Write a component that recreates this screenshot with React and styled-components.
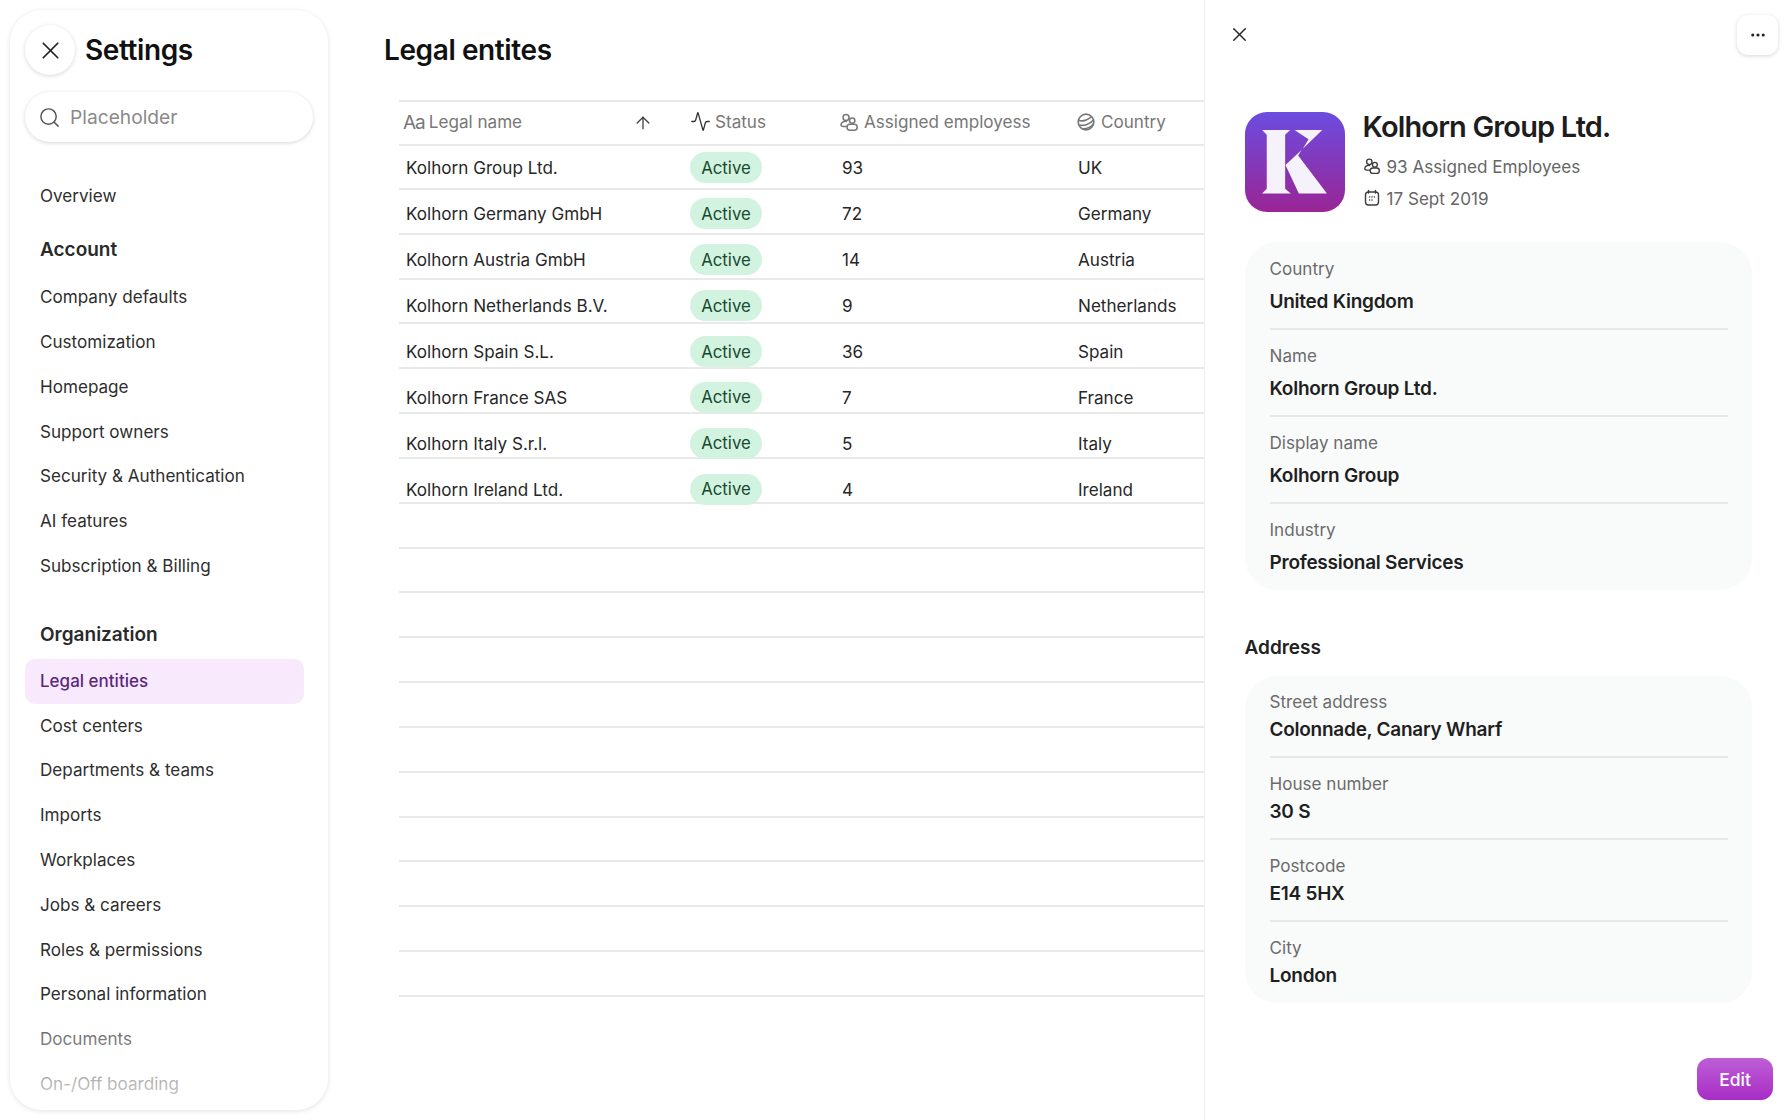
import React from "react";
import styled, { createGlobalStyle } from "styled-components";
import { X, Search, ArrowUp, Activity, MoreHorizontal } from "lucide-react";

const Global = createGlobalStyle`
  html, body { margin: 0; padding: 0; background: #fff; }
  body { font-family: Inter, "Noto Sans", sans-serif; color: #222; -webkit-font-smoothing: antialiased; }
  * { box-sizing: border-box; }
`;

const Page = styled.div`
  display: flex;
  width: 1792px;
  height: 1120px;
  overflow: hidden;
  background: #fff;
`;

const SideColumn = styled.div`
  flex: 0 0 328px;
  padding: 10px 0 10px 10px;
  display: flex;
`;

const SideCard = styled.aside`
  position: relative;
  flex: 1;
  border-radius: 32px;
  background: #fff;
  box-shadow: 0 1px 5px rgba(0, 0, 0, 0.12);
  padding: 15px 15px 0;
  overflow: hidden;
  display: flex;
  flex-direction: column;
  &::after {
    content: "";
    position: absolute;
    left: 0;
    right: 0;
    bottom: 0;
    height: 90px;
    background: linear-gradient(to bottom, rgba(255,255,255,0), rgba(255,255,255,0.78));
    pointer-events: none;
  }
`;

const SideHeader = styled.div`
  display: flex;
  align-items: center;
  gap: 10px;
`;

const RoundButton = styled.div`
  width: 50px;
  height: 50px;
  border-radius: 50%;
  background: #fff;
  box-shadow: 0 1px 4px rgba(0, 0, 0, 0.16);
  display: flex;
  align-items: center;
  justify-content: center;
  color: #222;
`;

const PageTitle = styled.h1`
  margin: 0;
  font-size: 28px;
  line-height: 34px;
  font-weight: 600;
  letter-spacing: -0.4px;
  color: #111;
`;

const SearchBox = styled.div`
  margin-top: 17px;
  width: 288px;
  height: 50px;
  border-radius: 25px;
  background: #fff;
  box-shadow: 0 1px 4px rgba(0, 0, 0, 0.16);
  display: flex;
  align-items: center;
  padding-left: 13px;
  gap: 9px;
  font-size: 19.2px;
  color: #8a8a8a;
`;

const NavList = styled.nav`
  margin-top: 31px;
  width: 279px;
  display: flex;
  flex-direction: column;
`;

const NavItem = styled.div`
  height: 44.8px;
  flex: none;
  display: flex;
  align-items: center;
  padding-left: 15px;
  font-size: ${(p) => (p.$active ? "17px" : "17.1px")};
  font-weight: ${(p) => (p.$active ? 500 : 400)};
  color: ${(p) => (p.$active ? "#5b2a7e" : p.$muted ? "#5e5e5e" : "#2e2e2e")};
  background: ${(p) => (p.$active ? "#f9e9fc" : "transparent")};
  border-radius: 10px;
  margin: ${(p) => (p.$active ? "1px 0 -1px" : "0")};
  padding-bottom: ${(p) => (p.$active ? "1px" : "0")};
`;

const NavHeading = styled.div`
  display: flex;
  align-items: center;
  padding-left: 15px;
  height: 30px;
  font-size: 19px;
  font-weight: 600;
  color: #2a2a2a;
  margin-top: ${(p) => p.$top}px;
  margin-bottom: ${(p) => p.$bottom}px;
`;

const Main = styled.main`
  flex: 0 0 876px;
  padding: 33px 0 0 56px;
  overflow: hidden;
`;

const Table = styled.div`
  margin: 33px 0 0 15px;
  width: 805px;
`;

const columns = "291px 149px 237px 1fr";

const HeadRow = styled.div`
  display: grid;
  grid-template-columns: ${columns};
  height: 46px;
  padding-bottom: 3px;
  align-items: center;
  border-top: 2px solid #e9e9e9;
  border-bottom: 2px solid #e9e9e9;
`;

const HeadCell = styled.div`
  display: flex;
  align-items: center;
  gap: ${(p) => p.$gap || 5}px;
  font-size: 17.1px;
  color: #777;
  padding-left: ${(p) => p.$pad || 0}px;
`;

const Sorter = styled.span`
  margin-left: auto;
  margin-right: 37px;
  display: flex;
  color: #444;
  transform: translateY(1px);
`;

const AaMark = styled.span`
  font-size: 19px;
  color: #777;
  letter-spacing: -1px;
  transform: translateY(1px);
`;

const TableBody = styled.div`
  height: 852px;
  background-image: repeating-linear-gradient(
    to bottom,
    transparent 0,
    transparent 42.84px,
    #e9e9e9 42.84px,
    #e9e9e9 44.84px
  );
`;

const Row = styled.div`
  display: grid;
  grid-template-columns: ${columns};
  height: 45.9px;
  align-items: center;
  font-size: 17.1px;
  color: #272727;
  &:first-child { margin-top: -1px; }
`;

const Cell = styled.div`
  padding-left: ${(p) => p.$pad || 0}px;
  white-space: nowrap;
`;

const Badge = styled.span`
  display: inline-flex;
  align-items: center;
  justify-content: center;
  height: 31px;
  width: 72px;
  border-radius: 16px;
  background: #d2f3df;
  color: #17492f;
  font-size: 16.8px;
`;

const Panel = styled.aside`
  flex: 1;
  border-left: 1.5px solid #efefef;
  display: flex;
  flex-direction: column;
  padding: 15px 14px 20px 39.5px;
  background: #fff;
`;

const PanelTop = styled.div`
  display: flex;
  align-items: center;
  justify-content: space-between;
  height: 40px;
`;

const CloseSlot = styled.div`
  display: flex;
  margin: -2px 0 0 -17px;
  color: #222;
`;

const MenuButton = styled.div`
  width: 41px;
  height: 40px;
  border-radius: 11px;
  background: #fff;
  box-shadow: 0 1px 4px rgba(0, 0, 0, 0.16);
  display: flex;
  align-items: center;
  justify-content: center;
  color: #222;
`;

const Identity = styled.div`
  margin-top: 57px;
  height: 100px;
  display: flex;
  gap: 18px;
`;

const LogoTile = styled.div`
  width: 100px;
  height: 100px;
  border-radius: 22px;
  background: linear-gradient(180deg, #6c4ce0 0%, #9a2595 100%);
  flex: none;
  display: flex;
  align-items: center;
  justify-content: center;
`;

const IdentityText = styled.div`
  display: flex;
  flex-direction: column;
  margin-top: -2px;
`;

const EntityName = styled.h2`
  margin: 0 0 6px;
  font-size: 29px;
  line-height: 34px;
  font-weight: 600;
  letter-spacing: -0.85px;
  color: #1d1d1d;
`;

const Meta = styled.div`
  display: flex;
  align-items: center;
  gap: 6px;
  flex: none;
  height: 32px;
  font-size: 17.1px;
  color: #666;
  & > svg { color: #3c3c3c; }
`;

const InfoCard = styled.section`
  margin-top: ${(p) => p.$top}px;
  width: 507px;
  background: #f9fafa;
  border-radius: 32px;
  padding: 15px 24px 0 25px;
`;

const Field = styled.div`
  height: ${(p) => p.$h}px;
  border-bottom: ${(p) => (p.$last ? "none" : "2px solid #e8e8e8")};
  display: flex;
  flex-direction: column;
  padding-top: ${(p) => p.$top}px;
  gap: ${(p) => p.$gap}px;
`;

const FieldLabel = styled.div`
  font-size: 17.1px;
  line-height: 22px;
  color: #6b6b6b;
`;

const FieldValue = styled.div`
  font-size: 19px;
  line-height: 24px;
  font-weight: 600;
  letter-spacing: -0.25px;
  color: #1f1f1f;
`;

const SectionHeading = styled.h3`
  margin: 46px 0 0;
  font-size: 19px;
  line-height: 24px;
  font-weight: 600;
  color: #222;
`;

const Footer = styled.div`
  margin-top: auto;
  display: flex;
  justify-content: flex-end;
  margin-right: 5px;
`;

const EditButton = styled.button`
  width: 76px;
  height: 42px;
  border: 0;
  border-radius: 12px;
  background: linear-gradient(180deg, #bd5fd6 0%, #a92cc6 100%);
  color: #fff;
  font: 500 17.5px Inter, sans-serif;
`;

const PeopleIcon = ({ size = 20 }) => (
  <svg width={size} height={size} viewBox="0 0 20 20" fill="none" stroke="currentColor" strokeWidth="1.5">
    <circle cx="7" cy="5.4" r="3" />
    <path d="M7.4 9.4C4.4 9 2 10.6 2 12.8c0 1.1.9 1.7 2.4 1.8h2.8" strokeLinecap="round" />
    <circle cx="13.2" cy="8.6" r="2.7" />
    <rect x="8" y="12.2" width="10.2" height="6" rx="3" />
  </svg>
);

const GlobeIcon = () => (
  <svg width="20" height="20" viewBox="0 0 20 20" fill="none" stroke="currentColor" strokeWidth="1.7">
    <circle cx="10" cy="10" r="7.8" />
    <path d="M2.6 8.2C6.6 9.8 12 8.2 15.6 4.5M3.3 13C8 14.2 14 12 17.5 8M7 17C11 16.8 15 14.8 17.6 12" />
  </svg>
);

const CalendarIcon = () => (
  <svg width="18" height="18" viewBox="0 0 18 18" fill="none" stroke="currentColor" strokeWidth="1.4">
    <rect x="2.5" y="3" width="13" height="13" rx="3" />
    <path d="M5.5 1.5v2.5M12.5 1.5v2.5" strokeLinecap="round" />
    <g fill="currentColor" stroke="none">
      <circle cx="6.6" cy="8" r=".8" /><circle cx="9" cy="8" r=".8" /><circle cx="11.4" cy="8" r=".8" />
      <circle cx="6.6" cy="11" r=".8" /><circle cx="9" cy="11" r=".8" />
    </g>
  </svg>
);

const KMark = () => (
  <svg width="65" height="63.5" viewBox="68 78 194 190">
    <path fill="#f6f2fb" d="M68 78H152L137 92V254L154 268H68L82 254V92Z" />
    <path fill="#f6f2fb" d="M165 78H248L190 134 207 106Z" />
    <path fill="#f6f2fb" d="M138 183L186 138 176 154 262 268H178Z" />
  </svg>
);

const accountItems = ["Company defaults", "Customization", "Homepage", "Support owners", "Security & Authentication", "AI features", "Subscription & Billing"];
const orgItems = ["Cost centers", "Departments & teams", "Imports", "Workplaces", "Jobs & careers", "Roles & permissions", "Personal information"];
const entities = [
  ["Kolhorn Group Ltd.", "93", "UK"],
  ["Kolhorn Germany GmbH", "72", "Germany"],
  ["Kolhorn Austria GmbH", "14", "Austria"],
  ["Kolhorn Netherlands B.V.", "9", "Netherlands"],
  ["Kolhorn Spain S.L.", "36", "Spain"],
  ["Kolhorn France SAS", "7", "France"],
  ["Kolhorn Italy S.r.l.", "5", "Italy"],
  ["Kolhorn Ireland Ltd.", "4", "Ireland"],
];
const generalFields = [
  ["Country", "United Kingdom"],
  ["Name", "Kolhorn Group Ltd."],
  ["Display name", "Kolhorn Group"],
  ["Industry", "Professional Services"],
];
const addressFields = [
  ["Street address", "Colonnade, Canary Wharf"],
  ["House number", "30 S"],
  ["Postcode", "E14 5HX"],
  ["City", "London"],
];

export default function App() {
  return (
    <Page>
      <Global />
      <SideColumn>
        <SideCard>
          <SideHeader>
            <RoundButton><X size={29} strokeWidth={1.4} /></RoundButton>
            <PageTitle>Settings</PageTitle>
          </SideHeader>
          <SearchBox>
            <Search size={23} strokeWidth={1.5} color="#555" />
            Placeholder
          </SearchBox>
          <NavList>
            <NavItem>Overview</NavItem>
            <NavHeading $top={17} $bottom={9.5}>Account</NavHeading>
            {accountItems.map((t) => <NavItem key={t}>{t}</NavItem>)}
            <NavHeading $top={32} $bottom={8}>Organization</NavHeading>
            <NavItem $active>Legal entities</NavItem>
            {orgItems.map((t) => <NavItem key={t}>{t}</NavItem>)}
            <NavItem $muted>Documents</NavItem>
            <NavItem $muted>On-/Off boarding</NavItem>
          </NavList>
        </SideCard>
      </SideColumn>
      <Main>
        <PageTitle>Legal entites</PageTitle>
        <Table>
          <HeadRow>
            <HeadCell $pad={4} $gap={4}>
              <AaMark>Aa</AaMark>Legal name
              <Sorter><ArrowUp size={20} strokeWidth={1.6} /></Sorter>
            </HeadCell>
            <HeadCell $gap={4}><Activity size={21} strokeWidth={1.5} color="#333" />Status</HeadCell>
            <HeadCell><PeopleIcon />Assigned employess</HeadCell>
            <HeadCell><GlobeIcon />Country</HeadCell>
          </HeadRow>
          <TableBody>
            {entities.map(([name, count, country]) => (
              <Row key={name}>
                <Cell $pad={7}>{name}</Cell>
                <Cell><Badge>Active</Badge></Cell>
                <Cell $pad={3}>{count}</Cell>
                <Cell $pad={2}>{country}</Cell>
              </Row>
            ))}
          </TableBody>
        </Table>
      </Main>
      <Panel>
        <PanelTop>
          <CloseSlot><X size={23} strokeWidth={1.5} /></CloseSlot>
          <MenuButton><MoreHorizontal size={18} strokeWidth={2.2} /></MenuButton>
        </PanelTop>
        <Identity>
          <LogoTile><KMark /></LogoTile>
          <IdentityText>
            <EntityName>Kolhorn Group Ltd.</EntityName>
            <Meta><PeopleIcon size={18} />93 Assigned Employees</Meta>
            <Meta><CalendarIcon />17 Sept 2019</Meta>
          </IdentityText>
        </Identity>
        <InfoCard $top={30}>
          {generalFields.map(([l, v], i) => (
            <Field key={l} $h={i === 0 ? 73 : i === 3 ? 86 : 87} $last={i === 3} $top={i === 0 ? 1 : 15} $gap={10}>
              <FieldLabel>{l}</FieldLabel>
              <FieldValue>{v}</FieldValue>
            </Field>
          ))}
        </InfoCard>
        <SectionHeading>Address</SectionHeading>
        <InfoCard $top={16}>
          {addressFields.map(([l, v], i) => (
            <Field key={l} $h={i === 0 ? 67 : i === 3 ? 81 : 82} $last={i === 3} $top={i === 0 ? 0 : 15} $gap={5}>
              <FieldLabel>{l}</FieldLabel>
              <FieldValue>{v}</FieldValue>
            </Field>
          ))}
        </InfoCard>
        <Footer><EditButton>Edit</EditButton></Footer>
      </Panel>
    </Page>
  );
}
